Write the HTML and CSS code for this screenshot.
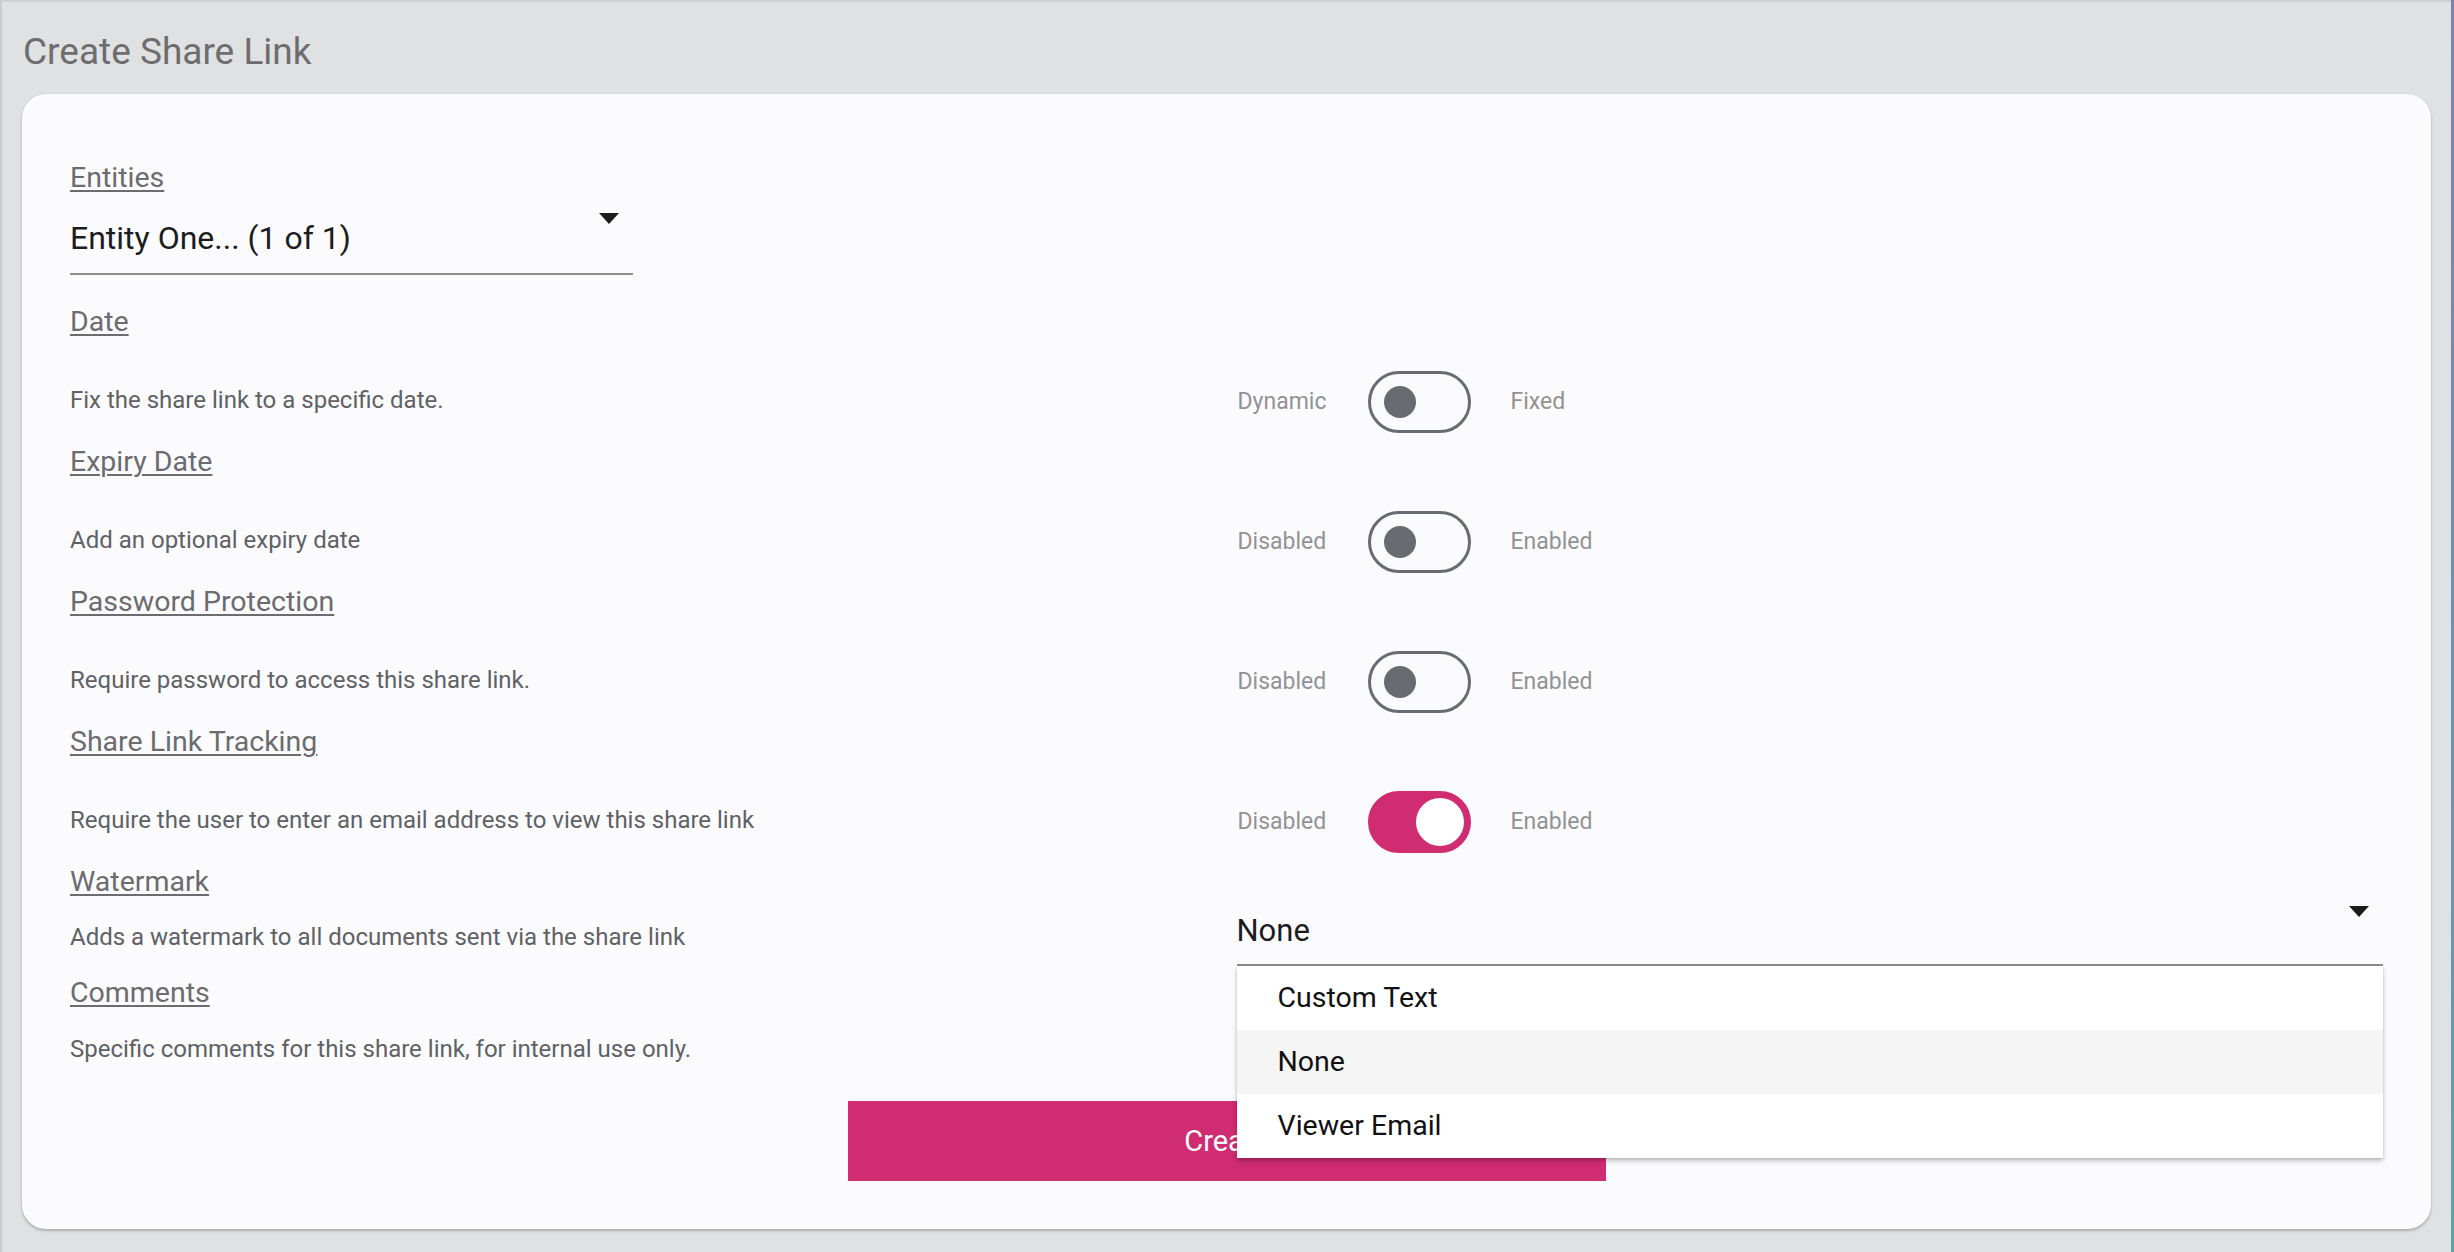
FILE: index.html
```html
<!DOCTYPE html>
<html lang="en">
<head>
<meta charset="utf-8">
<title>Create Share Link</title>
<link rel="stylesheet" href="styles.css">
</head>
<body>
<div class="page">
  <h1 class="title">Create Share Link</h1>
  <div class="card">
    <section class="field field-entities">
      <div class="heading"><span>Entities</span></div>
      <div class="select select-entity">
        <span class="select-value">Entity One... (1 of 1)</span>
        <i class="caret"></i>
      </div>
    </section>

    <section class="field field-toggle">
      <div class="heading"><span>Date</span></div>
      <div class="row">
        <p class="desc">Fix the share link to a specific date.</p>
        <div class="switch-group">
          <span class="switch-label left">Dynamic</span>
          <span class="switch"><span class="knob"></span></span>
          <span class="switch-label right">Fixed</span>
        </div>
      </div>
    </section>

    <section class="field field-toggle">
      <div class="heading"><span>Expiry Date</span></div>
      <div class="row">
        <p class="desc">Add an optional expiry date</p>
        <div class="switch-group">
          <span class="switch-label left">Disabled</span>
          <span class="switch"><span class="knob"></span></span>
          <span class="switch-label right">Enabled</span>
        </div>
      </div>
    </section>

    <section class="field field-toggle">
      <div class="heading"><span>Password Protection</span></div>
      <div class="row">
        <p class="desc">Require password to access this share link.</p>
        <div class="switch-group">
          <span class="switch-label left">Disabled</span>
          <span class="switch"><span class="knob"></span></span>
          <span class="switch-label right">Enabled</span>
        </div>
      </div>
    </section>

    <section class="field field-toggle">
      <div class="heading"><span>Share Link Tracking</span></div>
      <div class="row">
        <p class="desc">Require the user to enter an email address to view this share link</p>
        <div class="switch-group">
          <span class="switch-label left">Disabled</span>
          <span class="switch on"><span class="knob"></span></span>
          <span class="switch-label right">Enabled</span>
        </div>
      </div>
    </section>

    <section class="field field-watermark">
      <div class="heading"><span>Watermark</span></div>
      <div class="row row-watermark">
        <p class="desc desc-watermark">Adds a watermark to all documents sent via the share link</p>
        <div class="select-wrap">
          <div class="select select-watermark">
            <span class="select-value">None</span>
            <i class="caret"></i>
          </div>
          <ul class="menu">
            <li class="menu-item">Custom Text</li>
            <li class="menu-item selected">None</li>
            <li class="menu-item">Viewer Email</li>
          </ul>
        </div>
      </div>
    </section>

    <section class="field field-comments">
      <div class="heading"><span>Comments</span></div>
      <p class="desc desc-comments">Specific comments for this share link, for internal use only.</p>
    </section>

    <div class="actions">
      <button class="btn-create" type="button">Create</button>
    </div>
  </div>
</div>
</body>
</html>
```

FILE: styles.css
```css
* { box-sizing: border-box; }

html, body {
  margin: 0;
  padding: 0;
}

body {
  font-family: Roboto, "Liberation Sans", Arial, sans-serif;
  background: #e0e1e3;
}

.page {
  position: relative;
  min-height: 1252px;
  background: #e0e1e3;
  border-top: 2px solid #cfd0d2;
  border-left: 2px solid #cacbcd;
  padding: 0 23px 0 20px;
}

.page::after {
  content: "";
  position: absolute;
  top: -2px;
  right: 0;
  bottom: 0;
  width: 3px;
  background: linear-gradient(#7b84b7, #6a93b0 60%, #5ea1ad);
}

.title {
  margin: 0;
  padding: 28px 0 0 1px;
  font-size: 37px;
  line-height: 44px;
  font-weight: 400;
  color: #6d6d6f;
}

.card {
  margin-top: 20px;
  background: #fbfbfe;
  border-radius: 24px;
  box-shadow: 0 2px 3px rgba(0, 0, 0, 0.22), 0 0 2px rgba(0, 0, 0, 0.08);
  padding: 64px 48px 48px 48px;
}

.heading {
  font-size: 28.5px;
  line-height: 40px;
  height: 40px;
  color: #6b6b70;
}

.heading span {
  text-decoration: underline;
  text-decoration-thickness: 2px;
  text-underline-offset: 3px;
}

/* selects */
.select {
  position: relative;
  border-bottom: 2px solid #8d8d8f;
  color: #1c1c1e;
  font-size: 31px;
  line-height: 40px;
}

.select-entity {
  width: 563px;
  padding: 20px 0 15px 0;
  font-size: 32px;
}

.caret {
  position: absolute;
  right: 14px;
  width: 0;
  height: 0;
  border-left: 10px solid transparent;
  border-right: 10px solid transparent;
  border-top: 11px solid #1b1b1d;
}

.select-entity .caret { top: 15px; }

/* toggle sections */
.field-entities { margin-bottom: 27px; }

.field-toggle { padding-bottom: 9px; }

.row {
  display: grid;
  grid-template-columns: 1fr 1fr;
  column-gap: 20px;
  align-items: center;
}

.field-toggle .row {
  margin-top: 29px;
  height: 62px;
}

.desc {
  margin: 0;
  font-size: 24px;
  line-height: 30px;
  color: #606165;
}

.field-toggle .desc { margin-top: -4px; }

.switch-group {
  display: flex;
  align-items: center;
  padding-left: 1px;
}

.switch-label {
  font-size: 23px;
  line-height: 30px;
  color: #929294;
}

.switch-label.left { width: 130px; }
.switch-label.right { margin-left: 40px; }

.switch {
  position: relative;
  display: flex;
  align-items: center;
  width: 103px;
  height: 62px;
  border: 3px solid #686b71;
  border-radius: 31px;
  padding-left: 13px;
}

.switch .knob {
  width: 32px;
  height: 32px;
  border-radius: 50%;
  background: #686b71;
}

.switch.on {
  background: #cf2c72;
  border-color: #cf2c72;
  padding-left: 45px;
}

.switch.on .knob {
  width: 48px;
  height: 48px;
  background: #ffffff;
}

/* watermark */
.row-watermark { align-items: start; }

.desc-watermark { padding-top: 20px; }

.select-wrap { position: relative; }

.select-watermark {
  padding: 9px 0 13px 0;
}

.select-watermark .caret { top: 4px; }

.menu {
  position: absolute;
  top: 100%;
  left: 0;
  right: 0;
  margin: 0;
  padding: 0;
  list-style: none;
  background: #ffffff;
  box-shadow: 0 3px 5px rgba(0, 0, 0, 0.22), 0 1px 2px rgba(0, 0, 0, 0.12);
  z-index: 5;
}

.menu-item {
  height: 64px;
  line-height: 64px;
  padding-left: 41px;
  font-size: 28.5px;
  color: #111113;
}

.menu-item.selected { background: #f5f5f5; }

/* comments */
.field-comments { margin-top: 7px; }

.desc-comments { margin-top: 21px; }

/* action */
.actions {
  display: flex;
  justify-content: center;
  margin-top: 37px;
}

.btn-create {
  width: 758px;
  height: 80px;
  border: none;
  border-radius: 0;
  background: #cf2c72;
  color: #ffffff;
  font-family: Roboto, "Liberation Sans", Arial, sans-serif;
  font-size: 29px;
  cursor: pointer;
}
```
